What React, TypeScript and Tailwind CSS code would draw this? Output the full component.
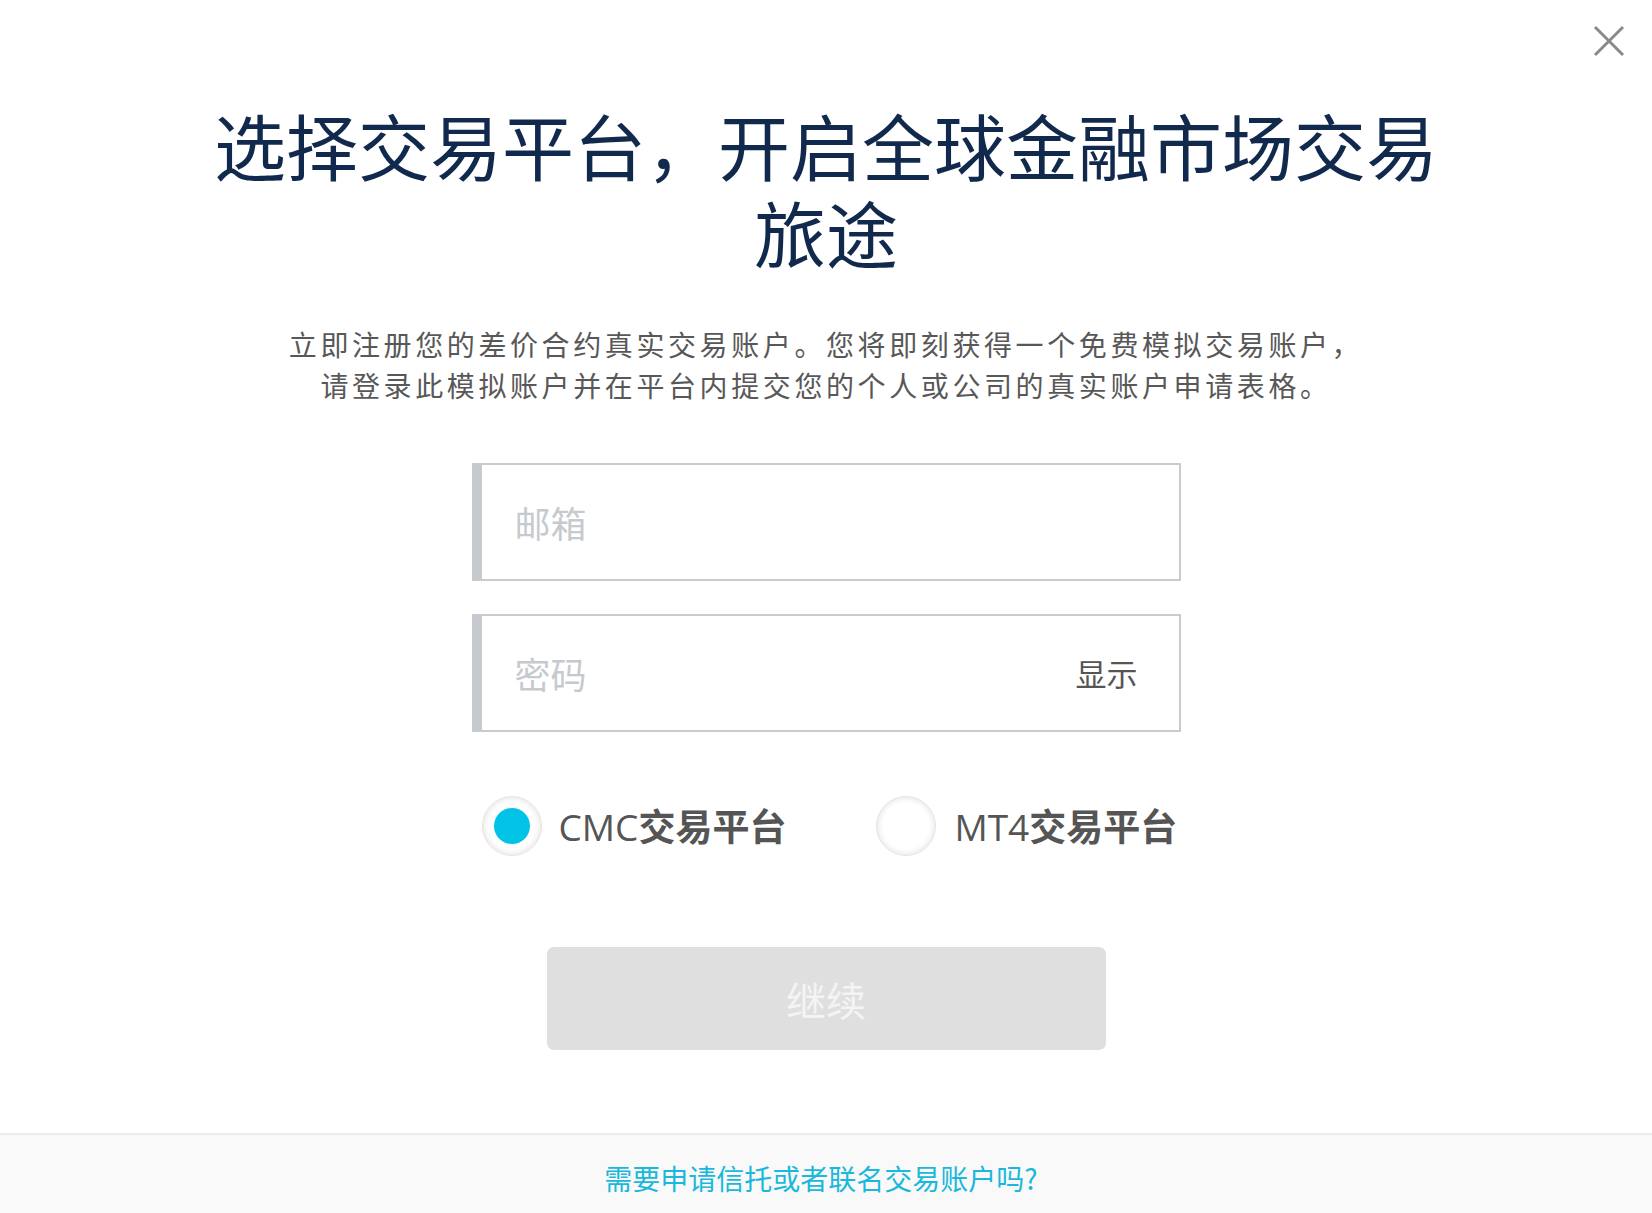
import { useState } from "react";

const cjk = "font-['Noto_Sans_CJK_SC',sans-serif]";

// Round radio with a soft grey ring, blue dot when picked
function Radio({ checked }: { checked: boolean }) {
  return (
    <span className="flex h-[60px] w-[60px] shrink-0 items-center justify-center rounded-full border border-[#e4e4e4] bg-[radial-gradient(circle,#ffffff_55%,#eeeeee_100%)] shadow-[inset_0_0_6px_rgba(0,0,0,0.09)]">
      {checked && <span className="h-[36px] w-[36px] rounded-full bg-[#02c2e7]" />}
    </span>
  );
}

export default function App() {
  const [platform, setPlatform] = useState<"cmc" | "mt4">("cmc");
  const [showPw, setShowPw] = useState(false);

  return (
    <div className={`relative flex min-h-screen flex-col bg-white ${cjk}`}>
      {/* close */}
      <button className="absolute right-[27px] top-[25px] h-[32px] w-[32px]" aria-label="close">
        <svg viewBox="0 0 32 32" className="h-[32px] w-[32px]" stroke="#8a8a8a" strokeWidth={3} fill="none">
          <path d="M2 2 L30 30 M30 2 L2 30" />
        </svg>
      </button>

      <div className="flex flex-col items-center">
        <h1 className="mt-[100px] text-center text-[72px] font-normal leading-[87px] text-[#11294c]">
          <span className="block">选择交易平台，开启全球金融市场交易</span>
          <span className="block">旅途</span>
        </h1>

        <p className="mt-[50px] text-center text-[28px] font-normal leading-[41px] tracking-[3.6px] text-[#585858]">
          立即注册您的差价合约真实交易账户。您将即刻获得一个免费模拟交易账户，
          <br />
          请登录此模拟账户并在平台内提交您的个人或公司的真实账户申请表格。
        </p>

        <div className="mt-[57px] flex w-[709px] flex-col gap-[33px]">
          <input
            type="email"
            placeholder="邮箱"
            className="h-[118px] w-full border-2 border-l-[10px] border-[#cbcbcb] border-l-[#c6cacf] bg-white pl-[33px] pr-[40px] text-[36px] text-[#333] outline-none placeholder:text-[#c6cace]"
          />
          <div className="flex h-[118px] w-full items-center border-2 border-l-[10px] border-[#cbcbcb] border-l-[#c6cacf] bg-white">
            <input
              type={showPw ? "text" : "password"}
              placeholder="密码"
              className="h-full min-w-0 flex-1 bg-transparent pl-[33px] text-[36px] text-[#333] outline-none placeholder:text-[#c6cace]"
            />
            <button
              onClick={() => setShowPw(!showPw)}
              className="pr-[41px] pl-4 text-[31px] text-[#555]"
            >
              显示
            </button>
          </div>

          <div className="mt-[31px] flex items-center gap-[90px] pl-[10px]">
            <label className="flex cursor-pointer items-center gap-[17px]" onClick={() => setPlatform("cmc")}>
              <Radio checked={platform === "cmc"} />
              <span className="text-[37px] leading-none text-[#555]">
                <span className="font-['Open_Sans',sans-serif]">CMC</span>
                <span className="font-bold">交易平台</span>
              </span>
            </label>
            <label className="flex cursor-pointer items-center gap-[18px]" onClick={() => setPlatform("mt4")}>
              <Radio checked={platform === "mt4"} />
              <span className="text-[37px] leading-none text-[#555]">
                <span className="font-['Open_Sans',sans-serif]">MT4</span>
                <span className="font-bold">交易平台</span>
              </span>
            </label>
          </div>
        </div>

        <button
          disabled
          className="mt-[91px] h-[103px] w-[559px] rounded-[7px] bg-[#dfdfdf] text-[40px] text-[#f4f4f4]"
        >
          继续
        </button>
      </div>

      <footer className="mt-auto h-[80px] border-t-2 border-[#ececec] bg-[#f9f9f9] pt-[23px] text-center">
        <a className="mr-[10px] text-[28px] leading-[40px] text-[#1ab8da]">需要申请信托或者联名交易账户吗?</a>
      </footer>
    </div>
  );
}
